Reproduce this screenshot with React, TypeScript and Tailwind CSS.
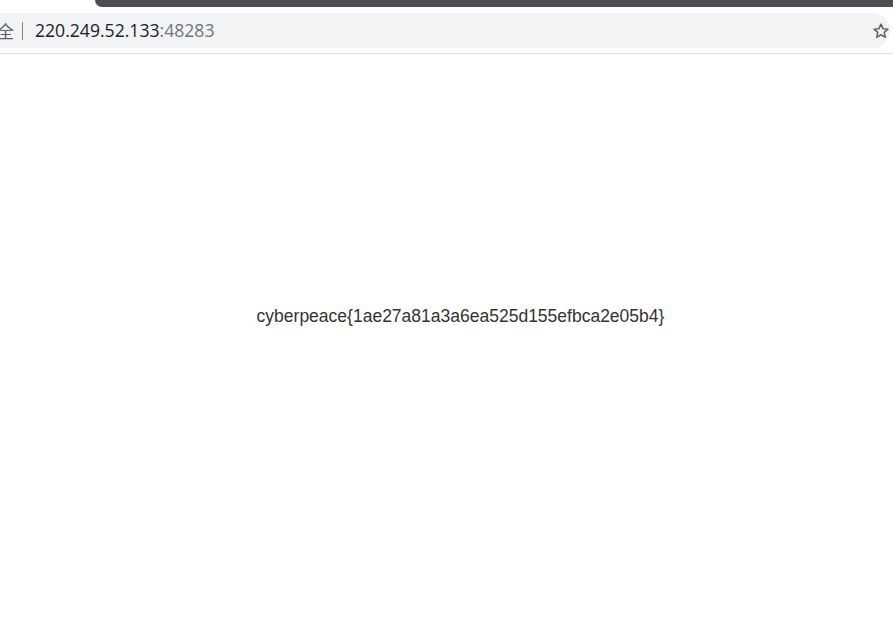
export default function App() {
  return (
    <div className="w-[893px] h-[625px] bg-white flex flex-col overflow-hidden" style={{ fontFamily: '"Noto Sans", "Noto Sans CJK SC", sans-serif' }}>
      <div className="h-[13px] flex">
        <div className="w-[95px]" />
        <div className="flex-1 h-[7px] bg-[#4b4e52] rounded-bl-[8px]" />
      </div>
      <div className="h-[35px] flex items-center bg-[#f1f3f4] rounded-r-[17px] mr-[3px]">
        <span className="text-[17px] text-[#5f6368] leading-none ml-[-3px]" style={{ fontFamily: '"Noto Sans CJK SC", sans-serif' }}>全</span>
        <span className="ml-[8px] w-[1px] h-[18px] bg-[#80868b]" />
        <span className="ml-[12px] text-[17.6px] leading-none text-[#202124]" style={{ fontFamily: '"Open Sans", "Noto Sans", sans-serif' }}>
          220.249.52.133<span className="text-[#70757a]">:48283</span>
        </span>
        <div className="flex-1" />
        <svg width="18" height="18" viewBox="0 0 24 24" className="mr-[0px]">
          <path d="M12 2.8l2.7 6.1 6.6.6-5 4.4 1.5 6.5L12 17l-5.8 3.4 1.5-6.5-5-4.4 6.6-.6z" fill="none" stroke="#5f6368" strokeWidth="2" strokeLinejoin="round" />
        </svg>
      </div>
      <div className="h-[5px]" />
      <div className="h-[1px] bg-[#dadce0]" />
      <div className="flex-1 flex justify-center pt-[252px] pl-[28px]">
        <span className="text-[17.5px] text-[#333333] leading-[20px]" style={{ fontFamily: '"Liberation Sans", Arial, sans-serif' }}>
          cyberpeace{'{'}1ae27a81a3a6ea525d155efbca2e05b4{'}'}
        </span>
      </div>
    </div>
  );
}
